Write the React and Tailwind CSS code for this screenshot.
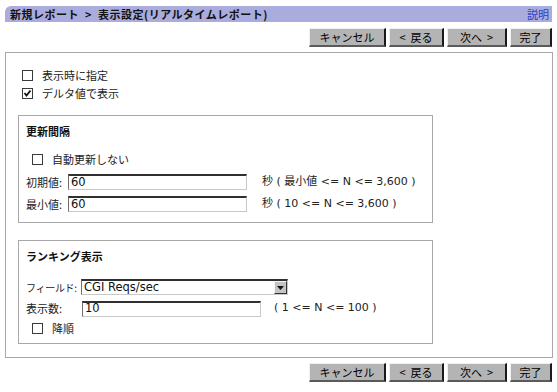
import React from "react";

const jp = { fontFamily: '"Noto Sans CJK JP", "Noto Sans", sans-serif' };
const dv = { fontFamily: '"DejaVu Sans", "Noto Sans CJK JP", sans-serif' };

function Check({ checked }) {
  return (
    <span className="relative inline-block w-[11px] h-[11px] border border-[#3a3a3a] bg-white shrink-0">
      {checked && (
        <svg className="absolute left-0 top-0" width="9" height="9" viewBox="0 0 9 9">
          <path d="M1.5 4 L3.5 6.5 L7.5 1.5" fill="none" stroke="#111" strokeWidth="1.8" />
        </svg>
      )}
    </span>
  );
}

function Btn({ children, w }) {
  return (
    <div
      className={`${w} h-[19px] flex items-center justify-center bg-[#b4b4b4] border-t border-l border-t-[#f0f0f0] border-l-[#f0f0f0] border-r-2 border-b-2 border-r-[#1a1a1a] border-b-[#5a5a5a] text-[11px] text-black leading-none whitespace-pre`}
      style={jp}
    >
      {children}
    </div>
  );
}

function Buttons() {
  return (
    <div className="flex justify-end gap-[3px]">
      <Btn w="w-[77px]">キャンセル</Btn>
      <Btn w="w-[55px]">{"<  戻る"}</Btn>
      <Btn w="w-[60px]">{"次へ  >"}</Btn>
      <Btn w="w-[42px]">完了</Btn>
    </div>
  );
}

function Input({ value, w }) {
  return (
    <div
      className={`${w} h-[16px] bg-white border-t-2 border-t-[#303030] border-l border-l-[#707070] border-r border-r-[#c8c8c8] border-b border-b-[#c8c8c8] flex items-center pl-[2px] text-[11.5px] text-[#111] leading-none`}
      style={dv}
    >
      {value}
    </div>
  );
}

export default function App() {
  return (
    <div className="w-[557px] h-[392px] bg-white px-[5px] pt-[6px] text-[#222]" style={jp}>
      <div className="h-[16px] bg-[#a9acdc] rounded-tl-[6px] flex items-center justify-between pl-[5px] pr-[3px]">
        <span className="text-[11px] font-bold text-[#111] leading-none tracking-[0.5px] whitespace-pre">
          {"新規レポート  >  表示設定(リアルタイムレポート)"}
        </span>
        <span className="text-[11px] text-[#2b3fc4] leading-none">説明</span>
      </div>
      <div className="mt-[6px]">
        <Buttons />
      </div>
      <div className="mt-[5px] w-[548px] h-[306px] border border-[#a8a8a8] pt-[13px]">
        <div className="flex flex-col pl-[16px]">
          <div className="h-[18px] flex items-center gap-[9px] text-[11px]">
            <Check />
            <span>表示時に指定</span>
          </div>
          <div className="h-[18px] flex items-center gap-[9px] text-[11px]">
            <Check checked />
            <span>デルタ値で表示</span>
          </div>
        </div>
        <div className="ml-[12px] mt-[13px] w-[415px] h-[108px] border border-[#a8a8a8] pt-[6px] pl-[7px]">
          <div className="h-[18px] flex items-center text-[11px] font-bold text-[#111]">更新間隔</div>
          <div className="mt-[10px] h-[18px] flex items-center gap-[9px] pl-[6px] text-[11px]">
            <Check />
            <span>自動更新しない</span>
          </div>
          <div className="mt-[6px] flex items-center h-[16px] text-[11px]">
            <span className="w-[42px]">初期値:</span>
            <Input value="60" w="w-[179px]" />
            <span className="ml-[15px] whitespace-pre" style={dv}>秒 ( 最小値 &lt;= N &lt;= 3,600 )</span>
          </div>
          <div className="mt-[6px] flex items-center h-[16px] text-[11px]">
            <span className="w-[42px]">最小値:</span>
            <Input value="60" w="w-[179px]" />
            <span className="ml-[15px] whitespace-pre" style={dv}>秒 ( 10 &lt;= N &lt;= 3,600 )</span>
          </div>
        </div>
        <div className="ml-[12px] mt-[17px] w-[415px] h-[104px] border border-[#a8a8a8] pt-[6px] pl-[7px]">
          <div className="h-[18px] flex items-center text-[11px] font-bold text-[#111]">ランキング表示</div>
          <div className="mt-[14px] flex items-center h-[16px] text-[11px]">
            <span className="w-[55px] whitespace-nowrap text-[10px] tracking-[-0.3px]">フィールド:</span>
            <div className="w-[207px] h-[16px] bg-white border-t-2 border-t-[#303030] border-l border-l-[#707070] border-r border-r-[#c8c8c8] border-b border-b-[#c8c8c8] flex items-center justify-between">
              <span className="pl-[2px] text-[11.5px] text-[#111] leading-none" style={dv}>CGI Reqs/sec</span>
              <span className="w-[13px] h-[13px] bg-[#c4c4c4] border-t border-l border-t-[#f4f4f4] border-l-[#f4f4f4] border-r border-b border-r-[#333] border-b-[#333] flex items-center justify-center">
                <svg width="7" height="4" viewBox="0 0 7 4">
                  <path d="M0 0 H7 L3.5 4 Z" fill="#111" />
                </svg>
              </span>
            </div>
          </div>
          <div className="mt-[5px] flex items-center h-[17px] text-[11px]">
            <span className="w-[56px]">表示数:</span>
            <Input value="10" w="w-[179px]" />
            <span className="ml-[13px] whitespace-pre" style={dv}>( 1 &lt;= N &lt;= 100 )</span>
          </div>
          <div className="mt-[2px] h-[18px] flex items-center gap-[9px] pl-[6px] text-[11px]">
            <Check />
            <span>降順</span>
          </div>
        </div>
      </div>
      <div className="mt-[5px]">
        <Buttons />
      </div>
    </div>
  );
}
